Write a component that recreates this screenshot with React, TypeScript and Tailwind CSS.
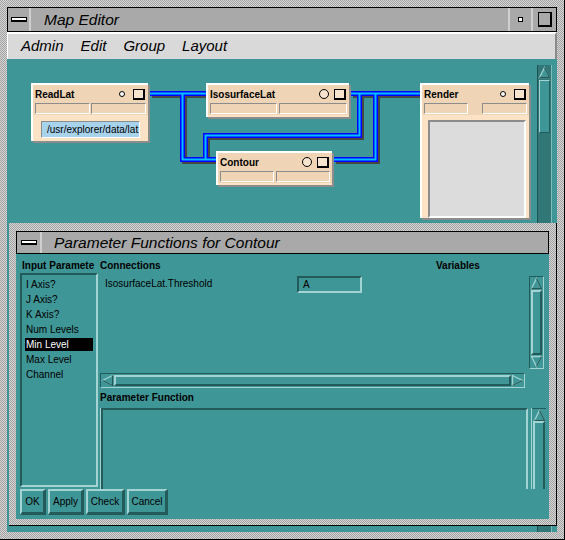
import React from "react";

const STIP =
  "bg-[image:repeating-conic-gradient(#d6d6d6_0%_25%,#a2a2a2_0%_50%)] bg-[length:2px_2px]";
const RAISED =
  "border-t-[#a3d3d3] border-l-[#a3d3d3] border-r-[#235b5b] border-b-[#235b5b]";
const SUNKEN =
  "border-t-[#235b5b] border-l-[#235b5b] border-r-[#a3d3d3] border-b-[#a3d3d3]";

function Tri({ d }: { d: "up" | "down" | "left" | "right" }) {
  const p = {
    up: "6.5,1.5 11.5,11.5 1.5,11.5",
    down: "1.5,1.5 11.5,1.5 6.5,11.5",
    left: "1.5,6.5 11.5,1.5 11.5,11.5",
    right: "1.5,1.5 11.5,6.5 1.5,11.5",
  }[d];
  const dk = {
    up: "6.5,1.5 11.5,11.5 1.5,11.5",
    down: "11.5,1.5 6.5,11.5",
    left: "1.5,6.5 11.5,11.5 11.5,1.5",
    right: "1.5,11.5 11.5,6.5",
  }[d];
  return (
    <svg width="13" height="13" viewBox="0 0 13 13" className="block">
      <polygon points={p} fill="#3f9696" stroke="#a3d3d3" strokeWidth="1.3" />
      <polyline points={dk} fill="none" stroke="#235b5b" strokeWidth="1.3" />
    </svg>
  );
}

function Field({ cls }: { cls: string }) {
  return (
    <div
      className={`h-[11px] bg-[#efd5b6] border border-t-[#8c8c8c] border-l-[#8c8c8c] border-r-white border-b-white ${cls}`}
    />
  );
}

function Sq() {
  return <div className="w-[12px] h-[11px] border border-black border-r-2 border-b-2 bg-[#f7e4cf]" />;
}

const WIRES = [
  "143,34.5 199,34.5",
  "175.5,34.5 175.5,100.5 209,100.5",
  "344,34.5 413,34.5",
  "352.5,34.5 352.5,76.5 198.5,76.5 198.5,100.5",
  "327,100.5 368.5,100.5 368.5,34.5",
];

const ITEMS = ["I Axis?", "J Axis?", "K Axis?", "Num Levels", "Min Level", "Max Level", "Channel"];

export default function App() {
  return (
    <div
      className={`relative w-[565px] h-[540px] overflow-hidden flex flex-col pt-[7px] pl-[7px] pr-[7px] pb-[7px] border-r border-b border-black ${STIP} font-['Liberation_Sans',Arial,sans-serif] text-black`}
    >
      {/* Title bar */}
      <div className="h-[25px] shrink-0 border border-black bg-[#a9a9a9] flex">
        <div className="w-[23px] flex items-center justify-center border-r-2 border-r-[#cfcfcf]">
          <div className="w-[16px] h-[5px] bg-white border border-black border-b-2" />
        </div>
        <div className="flex-1 flex items-center pl-[13px] italic text-[15.5px]">Map Editor</div>
        <div className="w-[25px] flex items-center justify-center border-l-2 border-l-[#cfcfcf] border-r-2 border-r-[#cfcfcf]">
          <div className="w-[5px] h-[5px] border-[1.5px] border-black bg-white" />
        </div>
        <div className="w-[23px] flex items-center justify-center">
          <div className="w-[14px] h-[15px] border border-black border-r-2 border-b-2 border-t-[#f0f0f0] border-l-[#f0f0f0] outline outline-1 outline-black -outline-offset-1" />
        </div>
      </div>

      {/* Menu bar */}
      <div className="h-[27px] shrink-0 flex items-center gap-[17px] pl-[13px] bg-[#d9d9d9] border-t-2 border-l border-white border-r-2 border-r-[#8a8a8a] italic text-[15px]">
        <span>Admin</span>
        <span>Edit</span>
        <span>Group</span>
        <span>Layout</span>
      </div>

      {/* Map canvas */}
      <div className="flex-1 bg-[#3f9696] flex">
        <div className="relative flex-1">
          <svg className="absolute left-0 top-0" width="530" height="200">
            <g transform="translate(2,2)">
              {WIRES.map((p, i) => (
                <polyline key={i} points={p} fill="none" stroke="#474747" strokeWidth="5" />
              ))}
            </g>
            {WIRES.map((p, i) => (
              <polyline key={i} points={p} fill="none" stroke="#0000ff" strokeWidth="5" />
            ))}
            {WIRES.map((p, i) => (
              <polyline key={i} points={p} fill="none" stroke="#00c0ff" strokeWidth="2" />
            ))}
          </svg>

          {/* ReadLat */}
          <div className="absolute left-[24px] top-[24px] w-[117px] h-[58px] bg-[#fce3c6] border-t-2 border-l-2 border-white shadow-[2px_2px_0_#8c8c8c] flex flex-col">
            <div className="h-[18px] bg-[#efd5b6] flex items-center pl-[2px] pr-[3px] text-[10px] font-bold">
              <span className="flex-1">ReadLat</span>
              <div className="w-[6px] h-[6px] rounded-full border border-black bg-white mr-[8px]" />
              <Sq />
            </div>
            <div className="h-[12px] bg-[#efd5b6] flex gap-[1px] px-[2px] pb-[1px]">
              <Field cls="w-[55px]" />
              <Field cls="flex-1" />
            </div>
            <div className="mt-[6px] ml-[8px] w-[99px] h-[17px] bg-[#a8d3ec] border border-t-[#8c8c8c] border-l-[#8c8c8c] border-r-white border-b-white text-[10px] leading-[15px] pl-[5px] overflow-hidden whitespace-nowrap">
              /usr/explorer/data/lat.lat
            </div>
          </div>

          {/* IsosurfaceLat */}
          <div className="absolute left-[199px] top-[24px] w-[143px] h-[34px] bg-[#fce3c6] border-t-2 border-l-2 border-white shadow-[2px_2px_0_#8c8c8c] flex flex-col">
            <div className="h-[18px] bg-[#efd5b6] flex items-center pl-[2px] pr-[3px] text-[10px] font-bold">
              <span className="flex-1">IsosurfaceLat</span>
              <div className="w-[10px] h-[10px] rounded-full border-[1.5px] border-black bg-[#f7e4cf] mr-[5px]" />
              <Sq />
            </div>
            <div className="h-[12px] bg-[#efd5b6] flex gap-[2px] px-[2px] pb-[1px]">
              <Field cls="w-[67px]" />
              <Field cls="flex-1" />
            </div>
          </div>

          {/* Contour */}
          <div className="absolute left-[209px] top-[92px] w-[116px] h-[34px] bg-[#fce3c6] border-t-2 border-l-2 border-white shadow-[2px_2px_0_#8c8c8c] flex flex-col">
            <div className="h-[18px] bg-[#efd5b6] flex items-center pl-[2px] pr-[3px] text-[10px] font-bold">
              <span className="flex-1">Contour</span>
              <div className="w-[10px] h-[10px] rounded-full border-[1.5px] border-black bg-[#f7e4cf] mr-[5px]" />
              <Sq />
            </div>
            <div className="h-[12px] bg-[#efd5b6] flex gap-[2px] px-[2px] pb-[1px]">
              <Field cls="w-[54px]" />
              <Field cls="flex-1" />
            </div>
          </div>

          {/* Render */}
          <div className="absolute left-[413px] top-[24px] w-[109px] h-[135px] bg-[#fce3c6] border-t-2 border-l-2 border-white shadow-[2px_2px_0_#8c8c8c] flex flex-col">
            <div className="h-[18px] bg-[#efd5b6] flex items-center pl-[2px] pr-[3px] text-[10px] font-bold">
              <span className="flex-1">Render</span>
              <div className="w-[6px] h-[6px] rounded-full border border-black bg-white mr-[8px]" />
              <Sq />
            </div>
            <div className="h-[12px] bg-[#efd5b6] flex justify-between px-[2px] pb-[1px]">
              <Field cls="w-[44px]" />
              <Field cls="w-[45px]" />
            </div>
            <div className="mt-[5px] ml-[6px] w-[98px] h-[98px] bg-[#dcdcdc] border-2 border-t-[#8c8c8c] border-l-[#8c8c8c] border-r-white border-b-white" />
          </div>
        </div>

        {/* Map vertical scrollbar */}
        <div className="mt-[6px] mr-[5px] w-[15px] bg-[#327777] border-l border-l-[#1f5252] border-r border-r-[#7fbcbc] flex flex-col items-center">
          <div className="mt-[1px] w-[13px] h-[13px]">
            <Tri d="up" />
          </div>
          <div className={`mt-[1px] w-[11px] h-[53px] bg-[#3f9696] border ${RAISED}`} />
        </div>
      </div>

      {/* Parameter Functions window */}
      <div
        className={`absolute left-[9px] top-[223px] w-[548px] h-[303px] ${STIP} pt-[8px] pl-[7px] pr-[7px] pb-[6px] border-r border-b border-black flex flex-col`}
      >
        <div className="h-[23px] shrink-0 border border-black bg-[#a9a9a9] flex">
          <div className="w-[25px] flex items-center justify-center border-r-2 border-r-[#cfcfcf]">
            <div className="w-[16px] h-[5px] bg-white border border-black border-b-2" />
          </div>
          <div className="flex-1 flex items-center pl-[12px] italic text-[15.5px]">
            Parameter Functions for Contour
          </div>
        </div>

        <div className="flex-1 bg-[#3f9696] flex flex-col text-[10px] leading-[12px] overflow-hidden">
          {/* labels */}
          <div className="h-[19px] shrink-0 flex items-start pt-[6px] font-bold">
            <div className="w-[84px] pl-[6px] whitespace-nowrap overflow-hidden">Input Paramete</div>
            <div className="w-[336px]">Connections</div>
            <div>Variables</div>
          </div>

          {/* middle */}
          <div className="h-[216px] shrink-0 flex">
            <div className={`ml-[4px] w-[78px] h-[214px] border-2 ${SUNKEN} pt-[2px] flex flex-col`}>
              {ITEMS.map((t) => (
                <div key={t} className="h-[15px] flex items-center">
                  <div
                    className={`ml-[3px] w-[68px] h-[13px] leading-[13px] pl-[1px] whitespace-nowrap ${
                      t === "Min Level" ? "bg-black text-white" : ""
                    }`}
                  >
                    {t}
                  </div>
                </div>
              ))}
            </div>

            <div className="ml-[2px] flex-1 flex flex-col overflow-hidden">
              {/* connections */}
              <div className="h-[100px] shrink-0 flex">
                <div className="w-[429px] flex items-start pt-[3px]">
                  <div className="w-[197px] pl-[5px] pt-[2px]">IsosurfaceLat.Threshold</div>
                  <div className={`w-[65px] h-[17px] border-2 ${SUNKEN} pl-[4px] leading-[13px]`}>A</div>
                </div>
                <div className={`mt-[3px] w-[15px] h-[93px] border ${SUNKEN} flex flex-col`}>
                  <div className="h-[13px] flex justify-center">
                    <Tri d="up" />
                  </div>
                  <div className={`flex-1 mx-[1px] border-2 ${RAISED}`} />
                  <div className="h-[13px] flex justify-center">
                    <Tri d="down" />
                  </div>
                </div>
              </div>

              {/* hscroll */}
              <div className={`w-[425px] h-[15px] shrink-0 border ${SUNKEN} flex`}>
                <div className="w-[13px] flex items-center">
                  <Tri d="left" />
                </div>
                <div className={`flex-1 my-[1px] border-2 ${RAISED}`} />
                <div className="w-[13px] flex items-center">
                  <Tri d="right" />
                </div>
              </div>

              <div className="h-[20px] shrink-0 pt-[4px] font-bold">Parameter Function</div>

              {/* text area */}
              <div className="h-[81px] shrink-0 flex">
                <div className="w-[428px] border-l border-l-[#a3d3d3]">
                  <div className={`h-[90px] border-t-2 border-l-2 border-r-2 ${SUNKEN}`} />
                </div>
                <div className={`ml-[3px] w-[15px] border-l border-l-[#a3d3d3] flex flex-col`}>
                  <div className={`h-[13px] flex justify-center border-t border-t-[#235b5b]`}>
                    <Tri d="up" />
                  </div>
                  <div className={`flex-1 mx-[1px] border-2 border-b-0 ${RAISED}`} />
                </div>
              </div>
            </div>
          </div>

          {/* buttons */}
          <div className="h-[26px] shrink-0 flex gap-[2px] pl-[4px]">
            {[
              ["OK", "w-[26px]"],
              ["Apply", "w-[36px]"],
              ["Check", "w-[39px]"],
              ["Cancel", "w-[41px]"],
            ].map(([t, w]) => (
              <div
                key={t}
                className={`${w} h-[26px] border-t-2 border-l-2 border-r-[3px] border-b-[3px] ${RAISED} flex items-center justify-center`}
              >
                {t}
              </div>
            ))}
          </div>
        </div>
      </div>
    </div>
  );
}
